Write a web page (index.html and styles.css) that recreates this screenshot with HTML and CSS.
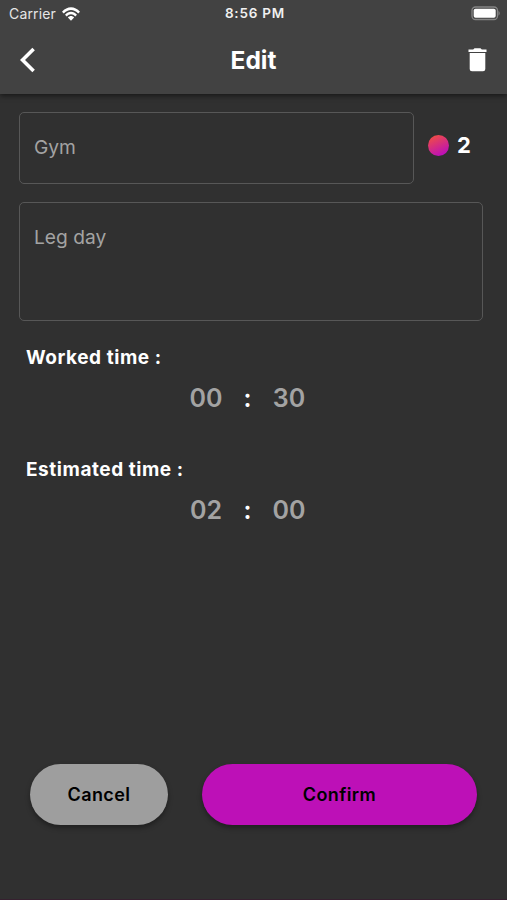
FILE: index.html
```
<!DOCTYPE html>
<html lang="en">
	<head>
		<meta charset="utf-8">
		<meta name="viewport" content="width=device-width, initial-scale=1">
		<title>Edit</title>
		<link rel="stylesheet" href="styles.css">
	</head>
	<body>
		<header class="header">
			<div class="statusbar">
				<div class="carrier">
					<span class="carriername">Carrier</span>
					<svg class="wifi" width="18" height="14" viewBox="0 0 18 14">
						<path d="M0 4.7C5-1.3 13-1.3 18 4.7L16.2 6.4C12.2 1.7 5.800 1.7 1.800 6.400Z"/>
						<path d="M3 7.700C6.300 3.700 11.700 3.700 15 7.700L13.200 9.400C10.800 6.600 7.200 6.600 4.800 9.400Z"/>
						<path d="M5.900 10.600C7.700 8.600 10.300 8.600 12.100 10.600L9 13.700Z"/>
					</svg>
				</div>
				<span class="clock">8:56 PM</span>
				<div class="power">
					<svg width="31" height="15" viewBox="0 0 31 15">
						<rect class="shell" x="2" y="1" width="25.500" height="12.500" rx="3.500"/>
						<rect x="3.700" y="2.800" width="22" height="9" rx="1.800"/>
						<path class="tip" d="M28.500 4.700Q31 7.200 28.500 9.700Z"/>
					</svg>
				</div>
			</div>
			<div class="navbar">
				<svg class="back" width="16" height="26" viewBox="0 0 16 26">
					<path d="M13.600 2L2.500 13L13.600 24"/>
				</svg>
				<h1 class="title">Edit</h1>
				<svg class="trash" width="19" height="24" viewBox="0 0 19 24">
					<path d="M0.500 1.500H5.200L6.500 0.300H12.500L13.800 1.500H18.500V4H0.500Z"/>
					<path d="M1.700 5H17.300V21Q17.300 23.300 15 23.300H4Q1.700 23.300 1.700 21Z"/>
				</svg>
			</div>
		</header>
		<main class="main">
			<div class="namerow">
				<div class="field name">Gym</div>
				<div class="points">
					<span class="dot"></span>
					<span>2</span>
				</div>
			</div>
			<div class="field description">Leg day</div>
			<section class="section">
				<h2 class="label">Worked time :</h2>
				<div class="time">
					<span class="digits">00</span>
					<span class="colon">:</span>
					<span class="digits">30</span>
				</div>
			</section>
			<section class="section">
				<h2 class="label">Estimated time :</h2>
				<div class="time">
					<span class="digits">02</span>
					<span class="colon">:</span>
					<span class="digits">00</span>
				</div>
			</section>
		</main>
		<footer class="actions">
			<button type="button" class="button cancel">Cancel</button>
			<button type="button" class="button confirm">Confirm</button>
		</footer>
	</body>
</html>
```
FILE: styles.css
```
* {
	box-sizing: border-box;
}
body {
	margin: 0; height: 100vh; min-height: 600px;
	display: flex; flex-direction: column;
	background: #303030; color: #fff; border-bottom: 1px solid #36202f;
	font-family: Inter, "Liberation Sans", sans-serif;
}
h1, h2 {
	margin: 0;
}

/* status bar and title */
.header {
	height: 94px; flex: none; background: #424242; box-shadow: 0 2px 5px rgba(0, 0, 0, 0.5);
}
.statusbar {
	height: 27px; padding: 0 6px 0 9px;
	display: grid; grid-template-columns: 1fr auto 1fr; align-items: center;
	font-size: 14px; line-height: 27px;
}
.carrier {
	display: flex; align-items: center; gap: 6px; color: #e6e6e6; letter-spacing: 0.15px;
}
.wifi {
	fill: #fff;
}
.clock {
	font-size: 13.5px; font-weight: 600; letter-spacing: 0.8px; color: #f0f0f0;
}
.power {
	display: flex; justify-content: flex-end; fill: #fff;
}
.shell {
	fill: none; stroke: #858585; stroke-width: 1.3;
}
.tip {
	fill: #858585;
}
.navbar {
	height: 65px; padding: 0 20px;
	display: grid; grid-template-columns: 1fr auto 1fr; align-items: center;
}
.back {
	fill: none; stroke: #fff; stroke-width: 3.6;
}
.title {
	font-size: 24.5px; font-weight: 700; line-height: 30px;
}
.trash {
	justify-self: end; fill: #fff;
}

/* form */
.main {
	flex: 1; padding: 18px 24px 0 19px;
}
.namerow {
	display: flex; margin-bottom: 18px;
}
.field {
	border: 1.5px solid #575757; border-radius: 5px; padding: 0 14px;
	color: #a3a3a3; font-size: 19.2px; line-height: 68px;
}
.name {
	width: 395px; height: 72px;
}
.description {
	height: 119px;
}
.points {
	height: 66px; padding-left: 14px;
	display: flex; align-items: center; gap: 8px;
	font-size: 22px; font-weight: 700;
}
.dot {
	width: 21px; height: 21px; border-radius: 50%;
	background: linear-gradient(155deg, #f2503f 5%, #bd10b7 85%);
}
.section {
	height: 112px; padding: 24px 0 0 7px;
}
.label {
	font-size: 19px; font-weight: 700; line-height: 26px; letter-spacing: 0.55px;
}
.time {
	display: flex; justify-content: center; padding: 11px 14px 0 0;
	font-size: 25px; font-weight: 600; line-height: 32px;
}
.digits {
	width: 34px; color: #a3a3a3; text-align: center;
}
.colon {
	width: 49px; text-align: center;
}

/* buttons */
.actions {
	flex: none; display: flex; gap: 34px; padding: 0 30px 74px;
}
.button {
	height: 61px; border: 0; border-radius: 31px; padding: 0;
	color: #000; font: 600 18px Inter, "Liberation Sans", sans-serif; letter-spacing: 0.4px;
	box-shadow: 0 3px 5px rgba(0, 0, 0, 0.35);
}
.cancel {
	width: 138px; background: #9e9e9e;
}
.confirm {
	flex: 1; background: #bd10b7;
}
```
